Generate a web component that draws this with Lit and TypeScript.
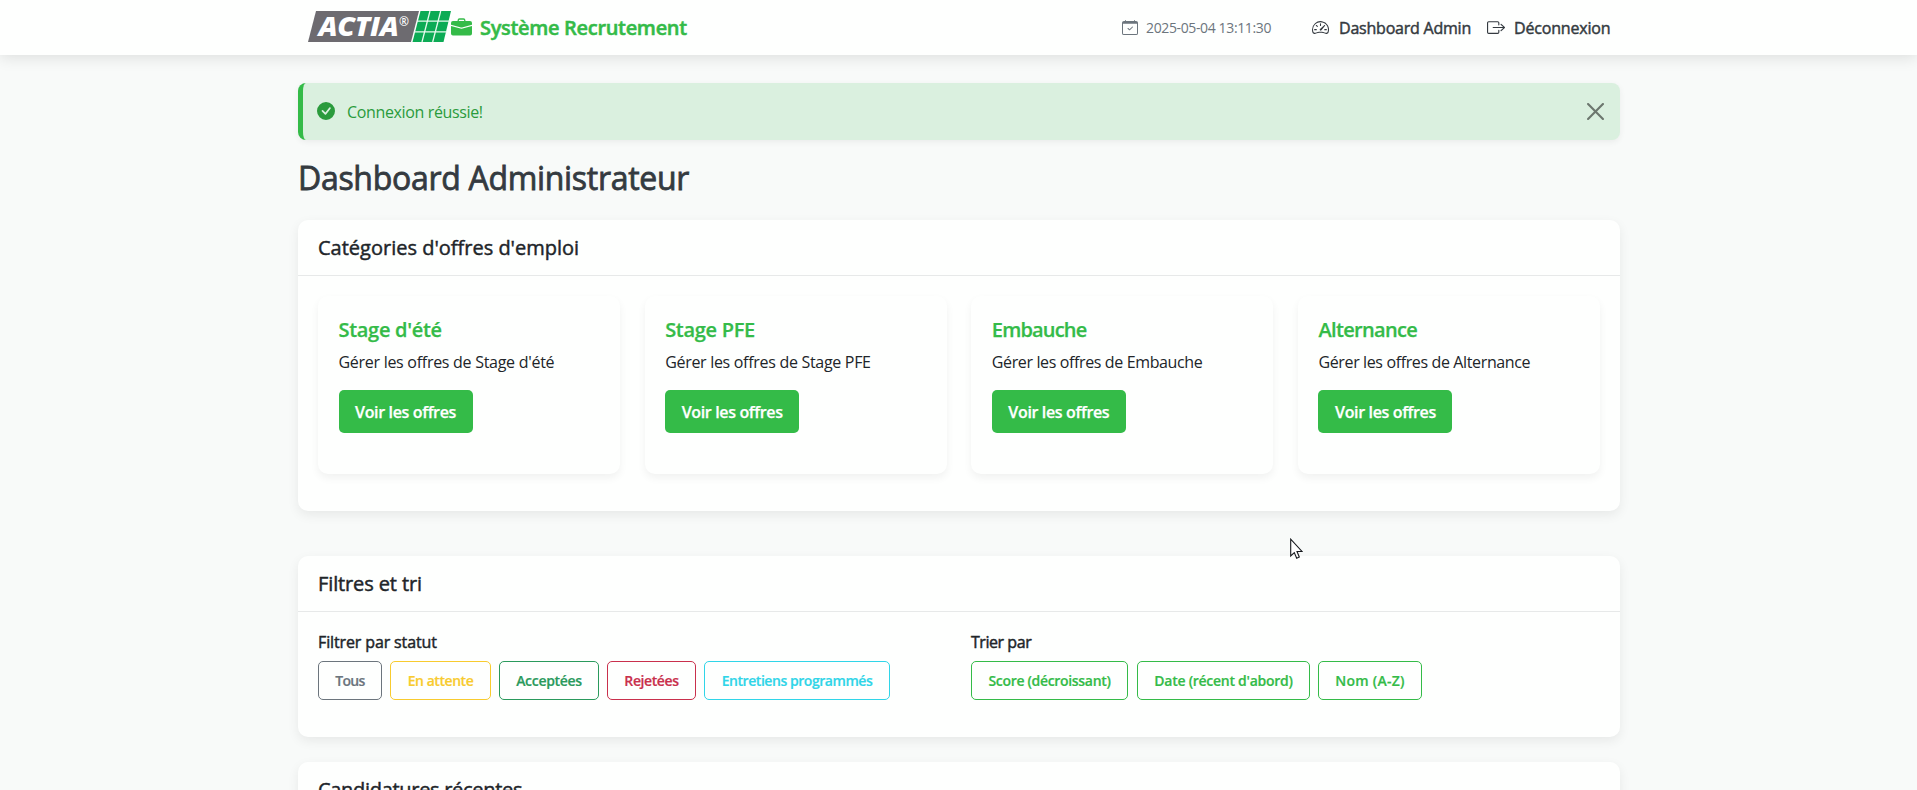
import { LitElement, html, svg, css } from "lit";
import { customElement } from "lit/decorators.js";

const icons = {
  briefcase: ["M6.5 1A1.5 1.5 0 0 0 5 2.5V3H1.5A1.5 1.5 0 0 0 0 4.5v1.384l7.614 2.03a1.5 1.5 0 0 0 .772 0L16 5.884V4.5A1.5 1.5 0 0 0 14.5 3H11v-.5A1.5 1.5 0 0 0 9.5 1zm0 1h3a.5.5 0 0 1 .5.5V3H6v-.5a.5.5 0 0 1 .5-.5", "M0 12.5A1.5 1.5 0 0 0 1.5 14h13a1.5 1.5 0 0 0 1.5-1.5V6.85L8.129 8.947a.5.5 0 0 1-.258 0L0 6.85z"],
  calendar: ["M10.854 7.146a.5.5 0 0 1 0 .708l-3 3a.5.5 0 0 1-.708 0l-1.5-1.5a.5.5 0 1 1 .708-.708L7.5 9.793l2.646-2.647a.5.5 0 0 1 .708 0", "M3.5 0a.5.5 0 0 1 .5.5V1h8V.5a.5.5 0 0 1 1 0V1h1a2 2 0 0 1 2 2v11a2 2 0 0 1-2 2H2a2 2 0 0 1-2-2V3a2 2 0 0 1 2-2h1V.5a.5.5 0 0 1 .5-.5M1 4v10a1 1 0 0 0 1 1h12a1 1 0 0 0 1-1V4z"],
  gauge: ["M8 4a.5.5 0 0 1 .5.5V6a.5.5 0 0 1-1 0V4.5A.5.5 0 0 1 8 4M3.732 5.732a.5.5 0 0 1 .707 0l.915.914a.5.5 0 1 1-.708.708l-.914-.915a.5.5 0 0 1 0-.707M2 10a.5.5 0 0 1 .5-.5h1.586a.5.5 0 0 1 0 1H2.5A.5.5 0 0 1 2 10m9.5 0a.5.5 0 0 1 .5-.5h1.5a.5.5 0 0 1 0 1H12a.5.5 0 0 1-.5-.5m.754-4.246a.39.39 0 0 0-.527-.02L7.547 9.31a.91.91 0 1 0 1.302 1.258l3.434-4.297a.39.39 0 0 0-.029-.518z", "M0 10a8 8 0 1 1 15.547 2.661c-.442 1.253-1.845 1.602-2.932 1.25C11.309 13.488 9.475 13 8 13c-1.474 0-3.31.488-4.615.911-1.087.352-2.49.003-2.932-1.25A8 8 0 0 1 0 10m8-7a7 7 0 0 0-6.603 9.329c.203.575.923.876 1.68.63C4.397 12.533 6.358 12 8 12s3.604.532 4.923.96c.757.245 1.477-.056 1.68-.631A7 7 0 0 0 8 3"],
  exit: ["M10 12.5a.5.5 0 0 1-.5.5h-8a.5.5 0 0 1-.5-.5v-9a.5.5 0 0 1 .5-.5h8a.5.5 0 0 1 .5.5v2a.5.5 0 0 0 1 0v-2A1.5 1.5 0 0 0 9.5 2h-8A1.5 1.5 0 0 0 0 3.5v9A1.5 1.5 0 0 0 1.5 14h8a1.5 1.5 0 0 0 1.5-1.5v-2a.5.5 0 0 0-1 0z", "M15.854 8.354a.5.5 0 0 0 0-.708l-3-3a.5.5 0 0 0-.708.708L14.293 7.5H5.5a.5.5 0 0 0 0 1h8.793l-2.147 2.146a.5.5 0 0 0 .708.708z"],
  check: ["M16 8A8 8 0 1 1 0 8a8 8 0 0 1 16 0m-3.97-3.03a.75.75 0 0 0-1.08.022L7.477 9.417 5.384 7.323a.75.75 0 0 0-1.06 1.06L6.97 11.03a.75.75 0 0 0 1.079-.02l3.992-4.99a.75.75 0 0 0-.01-1.05z"],
  close: ["M.293.293a1 1 0 0 1 1.414 0L8 6.586 14.293.293a1 1 0 1 1 1.414 1.414L9.414 8l6.293 6.293a1 1 0 0 1-1.414 1.414L8 9.414l-6.293 6.293a1 1 0 0 1-1.414-1.414L6.586 8 .293 1.707a1 1 0 0 1 0-1.414z"],
};

const icon = (name: keyof typeof icons) => html`
  <svg class="icon ${name}" viewBox="0 0 16 16" fill="currentColor" preserveAspectRatio="none">
    ${icons[name].map((d) => svg`<path d=${d}></path>`)}
  </svg>`;

const categories = [
  { name: "Stage d'été", cls: "ete" },
  { name: "Stage PFE", cls: "pfe" },
  { name: "Embauche", cls: "emb" },
  { name: "Alternance", cls: "alt" },
];

const filters = [
  { label: "Tous", cls: "tous" },
  { label: "En attente", cls: "attente" },
  { label: "Acceptées", cls: "acceptees" },
  { label: "Rejetées", cls: "rejetees" },
  { label: "Entretiens programmés", cls: "entretiens" },
];

const sorts = [
  { label: "Score (décroissant)", cls: "score" },
  { label: "Date (récent d'abord)", cls: "date" },
  { label: "Nom (A-Z)", cls: "nom" },
];

@customElement("app-root")
export class AppRoot extends LitElement {
  static styles = css`
    * { box-sizing: border-box; }
    :host {
      display: block; position: relative; height: 790px; overflow: hidden;
      background: #f8faf9; color: #212529;
      font-family: "Open Sans", "Noto Sans", sans-serif; font-size: 16px; line-height: 24px;
    }
    h1, h2, h3, p { margin: 0; font-weight: 400; white-space: nowrap; }
    button { font: inherit; white-space: nowrap; padding: 0; text-align: center; }
    svg { display: block; flex: none; }

    nav { height: 55px; background: #fefffe; box-shadow: 0 2px 15px rgba(0, 0, 0, .12); position: relative; }
    .bar { width: 1322px; margin-left: 298px; height: 55px; padding: 1px 9px 0 10px; display: flex; align-items: center; }
    .brand { display: flex; align-items: center; color: #34bb48; font-size: 20px; font-weight: 600; letter-spacing: -.32px; -webkit-text-stroke: .5px currentColor; }
    .logo { width: 143px; height: 31px; margin-top: -3px; -webkit-text-stroke: 0; }
    .briefcase { width: 21px; height: 21px; margin-right: 8px; margin-top: -1px; }
    .spacer { flex: 1; }
    .link { display: flex; align-items: center; white-space: nowrap; color: #343a40; -webkit-text-stroke: .45px currentColor; }
    .link svg { -webkit-text-stroke: 0; margin-top: -1px; }
    .clock { width: 190px; font-size: 14px; letter-spacing: -.37px; color: #6c757d; -webkit-text-stroke: 0; }
    .calendar { width: 16px; height: 15px; margin-right: 8px; }
    .gauge { width: 17px; height: 17px; margin-right: 10px; }
    .exit { width: 18px; height: 17px; margin-right: 9px; }
    .dash { width: 175px; letter-spacing: -.22px; }
    .out { width: 124px; letter-spacing: -.18px; }

    main { width: 1322px; margin-left: 298px; padding-top: 28px; }
    .alert {
      height: 57px; border-radius: 8px; border-left: 5px solid #34bb48; background: #daf0df; color: #2a9b3c;
      box-shadow: 0 2px 6px rgba(0, 0, 0, .06); display: flex; align-items: center; padding: 0 16px 0 14px;
      letter-spacing: -.36px;
    }
    .check { width: 18px; height: 18px; margin-right: 12px; margin-top: -1px; }
    .close { width: 17px; height: 17px; color: #000; opacity: .5; }
    h1 {
      margin: 22px 0 22px; height: 36px; line-height: 32px; font-size: 32px; color: #343a40; letter-spacing: -.3px;
      -webkit-text-stroke: .8px currentColor;
    }
    .card { background: #fefffe; border-radius: 10px; box-shadow: 0 4px 12px rgba(0, 0, 0, .07); }
    .card-head {
      height: 56px; padding: 0 20px; border-bottom: 1px solid #e7e9e9; display: flex; align-items: center;
      font-size: 20px; letter-spacing: 0; -webkit-text-stroke: .45px currentColor;
    }
    .cats { height: 291px; }
    .grid { display: grid; grid-template-columns: repeat(4, 302px); justify-content: space-between; padding: 20px 20px 0; }
    .cat { height: 178px; padding: 22px 20.5px; border-radius: 10px; background: #fefffe; box-shadow: 0 4px 8px rgba(0, 0, 0, .055); }
    .cat h3 { font-size: 20px; font-weight: 600; color: #34bb48; margin-bottom: 8px; -webkit-text-stroke: .25px currentColor; }
    h3.ete { letter-spacing: -.3px; }
    h3.pfe { letter-spacing: -.3px; }
    h3.emb { letter-spacing: -.82px; }
    h3.alt { letter-spacing: -.68px; }
    .cat p { letter-spacing: -.37px; margin-bottom: 16px; }
    .cat h3.ete + p { letter-spacing: -.28px; }
    .cat h3.pfe + p { letter-spacing: -.3px; }
    .cat button {
      display: block; width: 134px; height: 43px; border: 0; border-radius: 5px; background: #34bb48; color: #fff;
      font-weight: 600; letter-spacing: -.35px; -webkit-text-stroke: .25px currentColor;
    }
    .filters { margin-top: 45px; height: 181px; }
    .filters .card-head { letter-spacing: -.12px; }
    .cols { display: grid; grid-template-columns: 653px 1fr; padding: 18px 20px 0; }
    .label { letter-spacing: -.13px; margin-bottom: 7px; -webkit-text-stroke: .45px currentColor; }
    .label.sort { letter-spacing: -.45px; }
    .row { display: flex; gap: 8px; }
    .row button {
      height: 39px; border: 1px solid currentColor; border-radius: 5px; background: none;
      font-size: 14px; font-weight: 600; letter-spacing: -.45px; padding-top: 1px; -webkit-text-stroke: .2px currentColor;
    }
    .row .tous { width: 64px; color: #6c757d; letter-spacing: -.7px; }
    .row .attente { width: 101px; color: #f8cb2e; }
    .row .acceptees { width: 100px; color: #2a9a5c; letter-spacing: -.3px; }
    .row .rejetees { width: 89px; color: #c9304c; letter-spacing: -.4px; }
    .row .entretiens { width: 186px; color: #30d5e8; }
    .row .score { width: 157px; color: #34bb48; letter-spacing: -.32px; margin-right: 1px; }
    .row .date { width: 173px; color: #34bb48; letter-spacing: -.27px; }
    .row .nom { width: 104px; color: #34bb48; letter-spacing: .25px; }
    .recent { margin-top: 25px; height: 200px; }
    .recent .card-head { letter-spacing: -.3px; }
    .cursor { position: absolute; left: 1290px; top: 538px; width: 13px; height: 22px; }
  `;

  private logo() {
    return html`
      <svg class="logo" viewBox="0 0 143 31">
        <path d="M8 0H111L103 31H0Z" fill="#6d6b70"></path>
        <path d="M112.500 0H143L135.500 31H104.500Z" fill="#0cab55"></path>
        <path d="M122 0L114 31M132.700 0L124.700 31M109 10.200H142M106 20.800H139" stroke="#e6faee" stroke-width="1.300"></path>
        <text x="10.500" y="25.300" fill="#fff" font-family="Open Sans, sans-serif" font-size="26" font-weight="800" font-style="italic" textLength="80" lengthAdjust="spacingAndGlyphs">ACTIA</text>
        <text x="91" y="15" fill="#fff" font-family="Open Sans, sans-serif" font-size="12">®</text>
      </svg>`;
  }

  render() {
    return html`
      <nav>
        <div class="bar">
          <div class="brand">${this.logo()}${icon("briefcase")}<span>Système Recrutement</span></div>
          <div class="spacer"></div>
          <div class="link clock">${icon("calendar")}<span>2025-05-04 13:11:30</span></div>
          <div class="link dash">${icon("gauge")}<span>Dashboard Admin</span></div>
          <div class="link out">${icon("exit")}<span>Déconnexion</span></div>
        </div>
      </nav>
      <main>
        <div class="alert">${icon("check")}<span>Connexion réussie!</span><div class="spacer"></div>${icon("close")}</div>
        <h1>Dashboard Administrateur</h1>
        <section class="card cats">
          <h2 class="card-head">Catégories d'offres d'emploi</h2>
          <div class="grid">
            ${categories.map((c) => html`
              <article class="cat">
                <h3 class=${c.cls}>${c.name}</h3>
                <p>Gérer les offres de ${c.name}</p>
                <button>Voir les offres</button>
              </article>`)}
          </div>
        </section>
        <section class="card filters">
          <h2 class="card-head">Filtres et tri</h2>
          <div class="cols">
            <div>
              <p class="label">Filtrer par statut</p>
              <div class="row">${filters.map((f) => html`<button class=${f.cls}>${f.label}</button>`)}</div>
            </div>
            <div>
              <p class="label sort">Trier par</p>
              <div class="row">${sorts.map((s) => html`<button class=${s.cls}>${s.label}</button>`)}</div>
            </div>
          </div>
        </section>
        <section class="card recent">
          <h2 class="card-head">Candidatures récentes</h2>
        </section>
      </main>
      <svg class="cursor" viewBox="0 0 13 22">
        <path d="M.7 1.200V18L4.300 14.600L6.700 20.200L9.300 19L7 13.500H12Z" fill="#fff" stroke="#16181d" stroke-width="1.100"></path>
      </svg>`;
  }
}
